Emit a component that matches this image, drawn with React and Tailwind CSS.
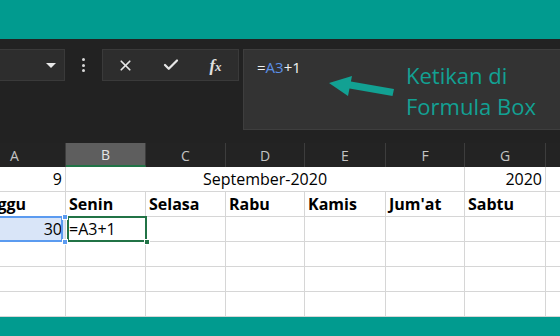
import React from "react";
import { X, Check } from "lucide-react";

// column widths for A..H (A starts off-screen)
const cols = [
  { key: "A", w: "w-[102px]" },
  { key: "B", w: "w-[80px]" },
  { key: "C", w: "w-[80px]" },
  { key: "D", w: "w-[79px]" },
  { key: "E", w: "w-[81px]" },
  { key: "F", w: "w-[79px]" },
  { key: "G", w: "w-[81px]" },
  { key: "H", w: "w-[80px]" },
];

const days = ["Minggu", "Senin", "Selasa", "Rabu", "Kamis", "Jum'at", "Sabtu", ""];

function Cell({ w, children, className = "" }) {
  return (
    <div
      className={`${w} shrink-0 h-[25px] border-r border-b border-[#d6d6d6] px-[3px] leading-[25px] whitespace-nowrap overflow-hidden ${className}`}
    >
      {children}
    </div>
  );
}

export default function App() {
  return (
    <div
      className="relative w-[560px] h-[336px] overflow-hidden bg-white flex flex-col"
      style={{ fontFamily: '"Open Sans", "Noto Sans", sans-serif' }}
    >
      <div className="h-[39px] shrink-0 bg-[#019b8f]" />

      {/* Formula bar area */}
      <div className="h-[104px] shrink-0 bg-[#222222] flex items-start pt-[10px]">
        <div className="w-[65px] shrink-0 h-[32px] bg-[#2d2d2d] border border-l-0 border-[#3a3a3a] flex items-center justify-end pr-[8px]">
          <div className="w-0 h-0 border-l-[5px] border-r-[5px] border-t-[5px] border-l-transparent border-r-transparent border-t-[#e8e8e8]" />
        </div>
        <div className="w-[37px] shrink-0 h-[32px] flex flex-col items-center justify-center gap-[2.5px]">
          <span className="w-[3px] h-[3px] rounded-full bg-[#d8d8d8]" />
          <span className="w-[3px] h-[3px] rounded-full bg-[#d8d8d8]" />
          <span className="w-[3px] h-[3px] rounded-full bg-[#d8d8d8]" />
        </div>
        <div className="w-[137px] shrink-0 h-[32px] bg-[#2d2d2d] border border-[#3a3a3a] grid grid-cols-3 items-center">
          <div className="flex justify-center">
            <X size={17} strokeWidth={2.4} color="#e6e6e6" />
          </div>
          <div className="flex justify-center">
            <Check size={18} strokeWidth={3} color="#e6e6e6" />
          </div>
          <div className="flex justify-center">
            <span
              className="italic font-bold text-[17px] text-[#e0e0e0] leading-none"
              style={{ fontFamily: '"Liberation Serif", "DejaVu Serif", serif' }}
            >
              f<span className="text-[13px]">x</span>
            </span>
          </div>
        </div>
        <div className="ml-[4px] w-[340px] shrink-0 h-[81px] bg-[#333333] border border-[#3e3e3e] pl-[13px] pt-[5px]">
          <span className="text-[15px] leading-[20px] text-[#f0f0f0]">
            =<span className="text-[#5b8fe6]">A3</span>+1
          </span>
        </div>
      </div>

      {/* Column headers */}
      <div className="h-[24px] shrink-0 bg-[#232323] flex ml-[-36px] text-[14px] text-[#c4c4c4]">
        {cols.map((c) => (
          <div
            key={c.key}
            className={`${c.w} shrink-0 h-[24px] border-r border-[#3d3d3d] flex items-center justify-center ${
              c.key === "B" ? "bg-[#5e5e5e] border-b-2 border-b-[#217346] text-[#e6e6e6]" : ""
            }`}
          >
            {c.key === "H" ? "" : c.key}
          </div>
        ))}
      </div>

      {/* Grid */}
      <div className="relative flex-1 ml-[-36px] text-[16px] text-black">
        <div className="flex">
          <Cell w="w-[102px]" className="text-right">9</Cell>
          <Cell w="w-[399px]" className="text-center">September-2020</Cell>
          <Cell w="w-[81px]" className="text-right">2020</Cell>
          <Cell w="w-[80px]" />
        </div>
        <div className="flex font-bold">
          {cols.map((c, i) => (
            <Cell key={c.key} w={c.w}>
              {days[i]}
            </Cell>
          ))}
        </div>
        <div className="flex">
          {cols.map((c) => (
            <Cell
              key={c.key}
              w={c.w}
              className={c.key === "A" ? "text-right bg-[#d9e5f8]" : ""}
            >
              {c.key === "A" ? "30" : c.key === "B" ? "=A3+1" : ""}
            </Cell>
          ))}
        </div>
        {[4, 5, 6].map((r) => (
          <div key={r} className="flex">
            {cols.map((c) => (
              <Cell key={c.key} w={c.w} />
            ))}
          </div>
        ))}

        {/* selection overlays */}
        <div className="absolute left-[30px] top-[49px] w-[69px] h-[26px] border-2 border-[#5b9bf0]" />
        <div className="absolute left-[103px] top-[49px] w-[80px] h-[26px] border-2 border-[#217346]" />
        <div className="absolute left-[98px] top-[47px] w-[6px] h-[6px] bg-[#5b9bf0] border border-white" />
        <div className="absolute left-[98px] top-[72px] w-[6px] h-[6px] bg-[#5b9bf0] border border-white" />
        <div className="absolute left-[180px] top-[72px] w-[6px] h-[6px] bg-[#217346] border border-white" />
      </div>

      <div className="h-[41px] shrink-0 bg-[#019b8f]" />

      {/* annotation */}
      <svg
        className="absolute left-[320px] top-[70px]"
        width="80"
        height="35"
        viewBox="320 70 80 35"
      >
        <polygon
          points="329,83 352,76 350.9,81.6 394,89 392.5,96 349.5,88.6 348,96"
          fill="#12a193"
        />
      </svg>
      <div className="absolute left-[406px] top-[60px] text-[22px] leading-[31px] text-[#12a193] whitespace-nowrap">
        Ketikan di
        <br />
        Formula Box
      </div>
    </div>
  );
}
